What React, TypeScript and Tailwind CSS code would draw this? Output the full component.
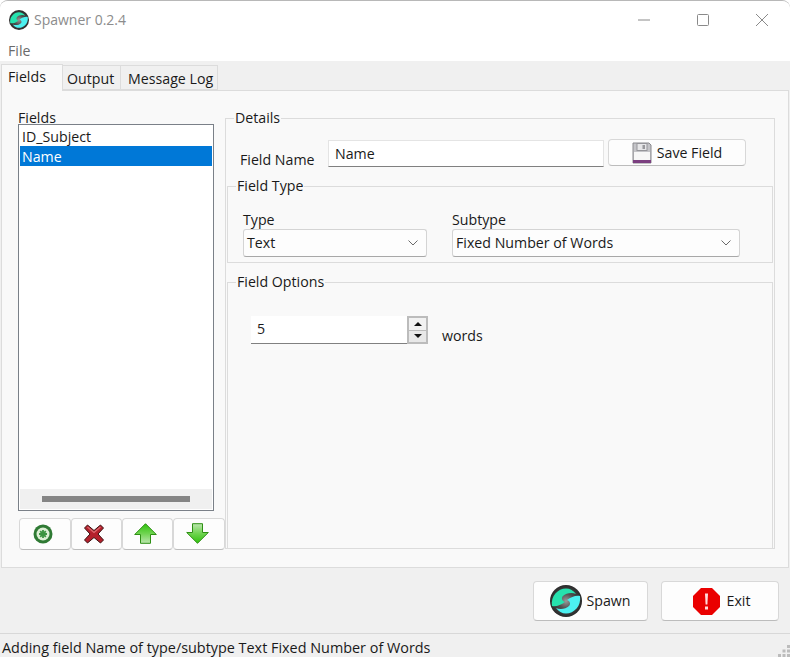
const font = "font-['Open_Sans','Noto_Sans',sans-serif] text-[14.2px] text-[#1a1a1a]";
const pushButton = "flex items-center justify-center bg-[#fdfdfd] border border-[#d8d8d8] border-b-[#bcbcbc] rounded-[4px]";
const toolButton = `${pushButton} h-[32px] pr-[4px] pb-[1px]`;
const comboBox = "flex items-center justify-between h-[28px] bg-[#fdfdfd] border border-[#d4d4d4] border-b-[#a8a8a8] rounded-[3px] pl-[3px] pr-[8px]";
const groupBox = "border border-[#dcdcdc] min-w-0";
const swirlArm = "M2 21C.5 11 8 3.500 16 3.500c4 0 7.500 2 10 5.500-4-2-10-1-13 2-2 2-1 5 2 6-4 3-9 5-13 4z";

const Swirl = ({ size, id }: { size: number; id: string }) => (
    <svg width={size} height={size} viewBox="0 0 32 32">
        <defs>
            <radialGradient id={id} cx="0.5" cy="0.5" r="0.52">
                <stop offset="0" stopColor="#9a9a9a" />
                <stop offset="0.45" stopColor="#505050" />
                <stop offset="1" stopColor="#262626" />
            </radialGradient>
        </defs>
        <circle cx="16" cy="16" r="16" fill={`url(#${id})`} />
        <path d={swirlArm} fill="#26e2ae" />
        <path d={swirlArm} fill="#4cf0f0" transform="rotate(180 16 16)" />
    </svg>
);

const FloppyIcon = () => (
    <svg width="20" height="22" viewBox="0 0 20 22">
        <path d="M1 1h16l2 2v18H1z" fill="#c4c4c8" stroke="#8a8a8e" strokeWidth="1" />
        <rect x="5" y="1.500" width="10" height="7" fill="#e6e6e8" stroke="#95959a" strokeWidth="1" />
        <rect x="10.500" y="3" width="2.500" height="4" fill="#98989c" />
        <rect x="2" y="10" width="16" height="8" fill="#f7f7f7" />
        <rect x="1" y="18" width="18" height="3" fill="#7b3f80" />
    </svg>
);

const AddIcon = () => (
    <svg width="20" height="20" viewBox="0 0 20 20">
        <circle cx="10" cy="10" r="9.500" fill="#2f7a34" />
        <circle cx="10" cy="10" r="6.500" fill="#dcefd4" />
        <path d="M10 6v8M6 10h8M7.200 7.200l5.600 5.600M12.800 7.200l-5.600 5.600" stroke="#3c9440" strokeWidth="1.800" />
    </svg>
);

const RemoveIcon = () => (
    <svg width="20" height="20" viewBox="0 0 20 20">
        <path d="M3.500 1 10 6.500 16.500 1 19.500 4 14 10l5.500 6-3 3L10 13.500 3.500 19l-3-3L6 10 .5 4z" fill="#b4202c" stroke="#3a1212" strokeWidth="1" />
        <path d="M3.500 3 10 8.500 16.500 3" fill="none" stroke="#dc6a70" strokeWidth="1.200" />
    </svg>
);

const ArrowIcon = ({ up, id }: { up: boolean; id: string }) => (
    <svg width="23" height="21" viewBox="0 0 23 21">
        <defs>
            <linearGradient id={id} x1="0" y1={up ? "0" : "1"} x2="0" y2={up ? "1" : "0"}>
                <stop offset="0" stopColor="#2fc20c" />
                <stop offset="0.5" stopColor="#6fd450" />
                <stop offset="1" stopColor="#bde6b0" />
            </linearGradient>
        </defs>
        <path d={up ? "M11.500 .7 22.300 11.500H16.500V20.300H6.500V11.500H.7z" : "M6.500 .7H16.500V9.500H22.300L11.500 20.300.7 9.500H6.500z"} fill={`url(#${id})`} stroke="#2e8f14" strokeWidth="1" />
    </svg>
);

const ExitIcon = () => (
    <svg width="27" height="27" viewBox="0 0 27 27">
        <path d="M8 0h11l8 8v11l-8 8H8l-8-8V8z" fill="#ea0000" />
        <path d="M12 5.500h3l-.6 11h-1.800z" fill="#ffdcdc" />
        <rect x="12" y="18.500" width="3" height="3" fill="#ffdcdc" />
    </svg>
);

const Chevron = () => (
    <svg width="10" height="6" viewBox="0 0 10 6"><path d="M.5 .5 5 5 9.500 .5" fill="none" stroke="#6a6a6a" strokeWidth="1" /></svg>
);

const App = () => {
    return (
        <div className={`${font} w-[790px] h-[657px] overflow-hidden bg-white`}>
            <div className="h-full flex flex-col bg-[#f0f0f0] border-t border-[#b8b8b8] rounded-t-[8px] overflow-hidden">
                <div className="h-[39px] shrink-0 bg-white flex items-center pl-[9px] pb-[2px]">
                    <Swirl size={20} id="titleSwirl" />
                    <span className="ml-[5px] text-[14px] text-[#8c8c8c] leading-none">Spawner 0.2.4</span>
                    <div className="ml-auto flex items-center">
                        <svg width="14" height="14" viewBox="0 0 14 14" className="mr-[45px]"><path d="M1 7h12" stroke="#8a8a8a" strokeWidth="1" /></svg>
                        <svg width="14" height="14" viewBox="0 0 14 14" className="mr-[45px]"><rect x="1.500" y="1.500" width="11" height="11" rx="1" fill="none" stroke="#8a8a8a" strokeWidth="1" /></svg>
                        <svg width="14" height="14" viewBox="0 0 14 14" className="mr-[21px]"><path d="M1 1l12 12M13 1 1 13" stroke="#8a8a8a" strokeWidth="1" /></svg>
                    </div>
                </div>
                <div className="h-[21px] shrink-0 bg-white pl-[8px] text-[#6a6a6a] leading-[21px]">File</div>

                <div className="h-[29px] shrink-0 flex items-end pl-[1px] relative z-10">
                    <div className="w-[62px] h-[27px] -mb-px bg-[#f9f9f9] border border-b-0 border-[#dcdcdc] pl-[6px] leading-[24px]">Fields</div>
                    <div className="w-[58px] h-[25px] bg-[#f0f0f0] border border-l-0 border-[#dcdcdc] pl-[4px] leading-[25px]">Output</div>
                    <div className="w-[97px] h-[25px] bg-[#f0f0f0] border border-l-0 border-[#dcdcdc] pl-[7px] leading-[25px]">Message Log</div>
                </div>

                <div className="h-[478px] shrink-0 mx-[1px] bg-[#f9f9f9] border border-[#dcdcdc] flex pl-[15px] pt-[18px]">
                    <div className="w-[208px] shrink-0 flex flex-col">
                        <div className="h-[16px] leading-[18px] pl-px relative z-10 -mb-px">Fields</div>
                        <div className="ml-px w-[196px] h-[387px] border border-[#7a8088] bg-white flex flex-col p-px">
                            <div className="h-[20px] pl-[2px] leading-[22px]">ID_Subject</div>
                            <div className="h-[20px] pl-[2px] leading-[22px] bg-[#0078d7] text-white">Name</div>
                            <div className="flex-1" />
                            <div className="h-[20px] bg-[#f0f0f0] flex items-center justify-center">
                                <div className="w-[148px] h-[6px] bg-[#858585]" />
                            </div>
                        </div>
                        <div className="flex mt-[7px] ml-[2px]">
                            <div className={`${toolButton} w-[52px]`}><AddIcon /></div>
                            <div className={`${toolButton} w-[51px]`}><RemoveIcon /></div>
                            <div className={`${toolButton} w-[52px]`}><ArrowIcon up id="upArrow" /></div>
                            <div className={`${toolButton} w-[52px]`}><ArrowIcon up={false} id="downArrow" /></div>
                        </div>
                    </div>

                    <fieldset className={`${groupBox} w-[550px] h-[440px] px-px flex flex-col`}>
                        <legend className="ml-[7px] px-[1px] leading-[18px]">Details</legend>
                        <div className="h-[50px] shrink-0 flex items-start pl-[13px] pt-[12px]">
                            <span className="mt-[11px] w-[88px] leading-[20px]">Field Name</span>
                            <div className="w-[276px] h-[27px] mt-[1px] bg-white border border-[#e4e4e4] border-b-[#808080] pl-[6px] leading-[25px]">Name</div>
                            <div className={`${pushButton} w-[138px] h-[27px] ml-[4px]`}>
                                <FloppyIcon />
                                <span className="ml-[5px]">Save Field</span>
                            </div>
                        </div>
                        <fieldset className={`${groupBox} h-[86px] shrink-0`}>
                            <legend className="ml-[8px] px-[1px] leading-[18px]">Field Type</legend>
                            <div className="flex gap-[25px] pl-[15px] mt-[16px]">
                                <div className="w-[184px]">
                                    <div className="leading-[18px]">Type</div>
                                    <div className={comboBox}>Text<Chevron /></div>
                                </div>
                                <div className="w-[288px]">
                                    <div className="leading-[18px]">Subtype</div>
                                    <div className={comboBox}>Fixed Number of Words<Chevron /></div>
                                </div>
                            </div>
                        </fieldset>
                        <fieldset className={`${groupBox} h-[276px] shrink-0 mt-[10px]`}>
                            <legend className="ml-[8px] px-[1px] leading-[18px]">Field Options</legend>
                            <div className="flex items-start mt-[25px] pl-[23px]">
                                <div className="w-[177px] h-[28px] flex bg-white border-b border-[#808080]">
                                    <div className="flex-1 pl-[6px] leading-[26px]">5</div>
                                    <div className="w-[21px] h-[28px] bg-[#e8e8e8] border-2 border-[#bcbcbc] flex flex-col">
                                        <div className="flex-1 flex items-center justify-center border-b border-[#bcbcbc] bg-[#f2f2f2]">
                                            <svg width="8" height="4" viewBox="0 0 8 4"><path d="M4 0 8 4H0z" fill="#111111" /></svg>
                                        </div>
                                        <div className="flex-1 flex items-center justify-center">
                                            <svg width="8" height="4" viewBox="0 0 8 4"><path d="M0 0h8L4 4z" fill="#111111" /></svg>
                                        </div>
                                    </div>
                                </div>
                                <span className="ml-[14px] mt-[10px] leading-[20px]">words</span>
                            </div>
                        </fieldset>
                    </fieldset>
                </div>

                <div className="h-[65px] shrink-0 flex items-start justify-end pt-[13px] pr-[11px] gap-[13px]">
                    <div className={`${pushButton} w-[115px] h-[40px]`}>
                        <Swirl size={32} id="spawnSwirl" />
                        <span className="ml-[4px]">Spawn</span>
                    </div>
                    <div className={`${pushButton} w-[118px] h-[40px] pl-[3px]`}>
                        <ExitIcon />
                        <span className="ml-[7px]">Exit</span>
                    </div>
                </div>

                <div className="flex-1 min-h-0 border-t border-[#d8d8d8] pl-[2px] text-[14.4px] leading-[28px] whitespace-nowrap relative">
                    Adding field Name of type/subtype Text Fixed Number of Words
                    <svg width="12" height="12" viewBox="0 0 12 12" className="absolute right-0 bottom-0">
                        <path d="M9 0h3v3H9zM4.500 4.500h3v3h-3zM9 4.500h3v3H9zM0 9h3v3H0zM4.500 9h3v3h-3zM9 9h3v3H9z" fill="#bcbcbc" />
                    </svg>
                </div>
            </div>
        </div>
    );
};

export default App;
